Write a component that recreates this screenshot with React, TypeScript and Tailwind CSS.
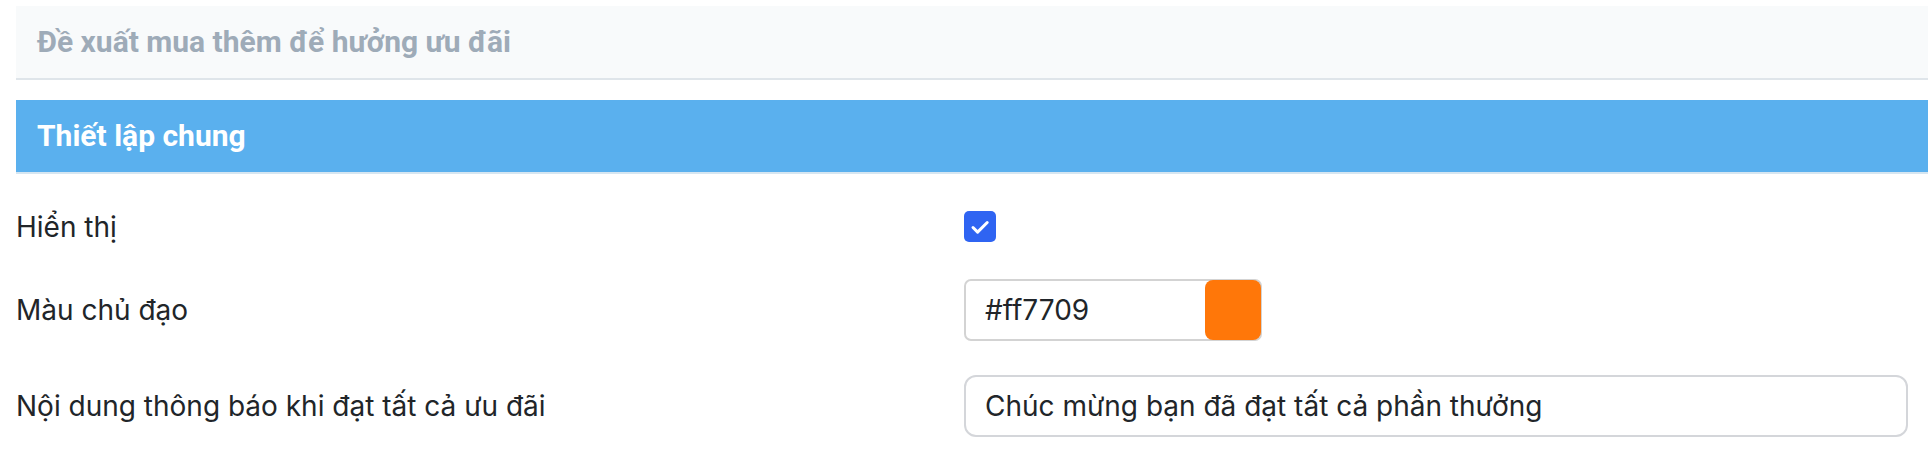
import React from "react";

export default function App() {
  return (
    <div className="w-[1928px] h-[454px] overflow-hidden bg-white font-['Inter','Noto_Sans',sans-serif] text-[#212529]">
      <div className="pt-[6px] pl-4">
        {/* Suggestion header */}
        <div className="h-[74px] bg-[#f8fafb] border-b-2 border-[#dfe5ea] flex items-center pl-[21px]">
          <span className="font-['Roboto',sans-serif] font-bold text-[30px] text-[#9eabb8] leading-none">
            Đề xuất mua thêm để hưởng ưu đãi
          </span>
        </div>

        {/* Section header */}
        <div className="mt-5 h-[74px] bg-[#5ab0ee] border-b-2 border-[#d6e6f1] flex items-center pl-[21px]">
          <span className="font-['Roboto',sans-serif] font-bold text-[30px] text-white leading-none">
            Thiết lập chung
          </span>
        </div>
      </div>

      <div className="px-4">
        {/* Hiển thị */}
        <div className="mt-[37px] grid grid-cols-2 items-center">
          <span className="text-[28px] leading-none">Hiển thị</span>
          <div className="w-[32px] h-[31px] rounded-[5px] bg-[#2f64f2] flex items-center justify-center">
            <svg width="26" height="26" viewBox="0 0 26 26" fill="none">
              <path d="M6 13.5l4.6 4.6 9.6-9.6" stroke="white" strokeWidth="3" strokeLinecap="round" strokeLinejoin="round" />
            </svg>
          </div>
        </div>

        {/* Màu chủ đạo */}
        <div className="mt-[37px] grid grid-cols-2 items-center">
          <span className="text-[28px] leading-none">Màu chủ đạo</span>
          <div className="w-[298px] h-[62px] border-2 border-[#d3d3d3] rounded-[7px] flex items-center pl-[19px]">
            <span className="text-[28px] leading-none">#ff7709</span>
            <div className="ml-auto w-[56px] h-[60px] -mr-[1px] rounded-[8px] bg-[#ff7709]" />
          </div>
        </div>

        {/* Nội dung thông báo */}
        <div className="mt-[34px] grid grid-cols-2 items-center">
          <span className="text-[28px] leading-none">Nội dung thông báo khi đạt tất cả ưu đãi</span>
          <div className="w-[944px] h-[62px] border-2 border-[#d4d6da] rounded-[12px] flex items-center pl-[19px]">
            <span className="text-[28px] leading-none">Chúc mừng bạn đã đạt tất cả phần thưởng</span>
          </div>
        </div>
      </div>
    </div>
  );
}
